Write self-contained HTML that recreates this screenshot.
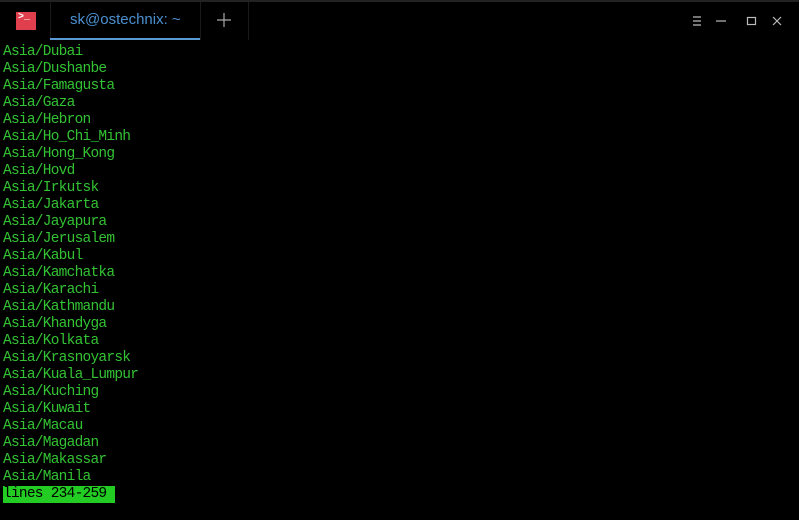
<!DOCTYPE html>
<html><head><style>
body{margin:0;width:799px;height:520px;background:#000;overflow:hidden;position:relative;font-family:"Liberation Sans",sans-serif}
.top{position:absolute;left:0;top:0;width:799px;height:2px;background:#222}
.icon{position:absolute;left:16px;top:12px;width:20px;height:18px;background:#e0404e;color:#fff;font:bold 10px "Liberation Mono",monospace;line-height:12px;padding-left:2px;box-sizing:border-box}
.sep{position:absolute;top:2px;width:1px;height:38px;background:#1a1a1a}
.tab{position:absolute;left:70px;top:11px;color:#4a90d0;font-size:15px}
.ul{position:absolute;left:50px;top:38px;width:150px;height:2px;background:#5b9bd5}
.plus{position:absolute;left:216px;top:12px;width:16px;height:16px}
.term{position:absolute;left:3px;top:44px;font-family:"Liberation Mono",monospace;font-size:14.5px;letter-spacing:-0.75px;line-height:17px;color:#33c233;white-space:pre}
.st{background:#22cc22;color:#000;display:inline-block;width:112px;margin-top:-1px}
</style></head><body>
<div class="top"></div>
<div class="icon">&gt;_</div>
<div class="sep" style="left:50px"></div><div class="sep" style="left:200px"></div><div class="sep" style="left:248px"></div>
<div class="tab">sk@ostechnix: ~</div>
<div class="ul"></div>
<svg class="plus" viewBox="0 0 16 16"><path d="M8 1V15M1 8H15" stroke="#aaa" stroke-width="1.2"/></svg>
<svg style="position:absolute;left:690px;top:14px" width="100" height="14" viewBox="0 0 100 14">
<path d="M3 3H11M3 7H11M3 11H11" stroke="#bbb" stroke-width="1.2"/>
<path d="M26 7H36" stroke="#bbb" stroke-width="1.2"/>
<rect x="57.5" y="3.5" width="8" height="7" fill="none" stroke="#bbb" stroke-width="1.2"/>
<path d="M83 3L91 11M91 3L83 11" stroke="#bbb" stroke-width="1.2"/>
</svg>
<div class="term">Asia/Dubai
Asia/Dushanbe
Asia/Famagusta
Asia/Gaza
Asia/Hebron
Asia/Ho_Chi_Minh
Asia/Hong_Kong
Asia/Hovd
Asia/Irkutsk
Asia/Jakarta
Asia/Jayapura
Asia/Jerusalem
Asia/Kabul
Asia/Kamchatka
Asia/Karachi
Asia/Kathmandu
Asia/Khandyga
Asia/Kolkata
Asia/Krasnoyarsk
Asia/Kuala_Lumpur
Asia/Kuching
Asia/Kuwait
Asia/Macau
Asia/Magadan
Asia/Makassar
Asia/Manila
<span class="st">lines 234-259</span></div>
</body></html>
